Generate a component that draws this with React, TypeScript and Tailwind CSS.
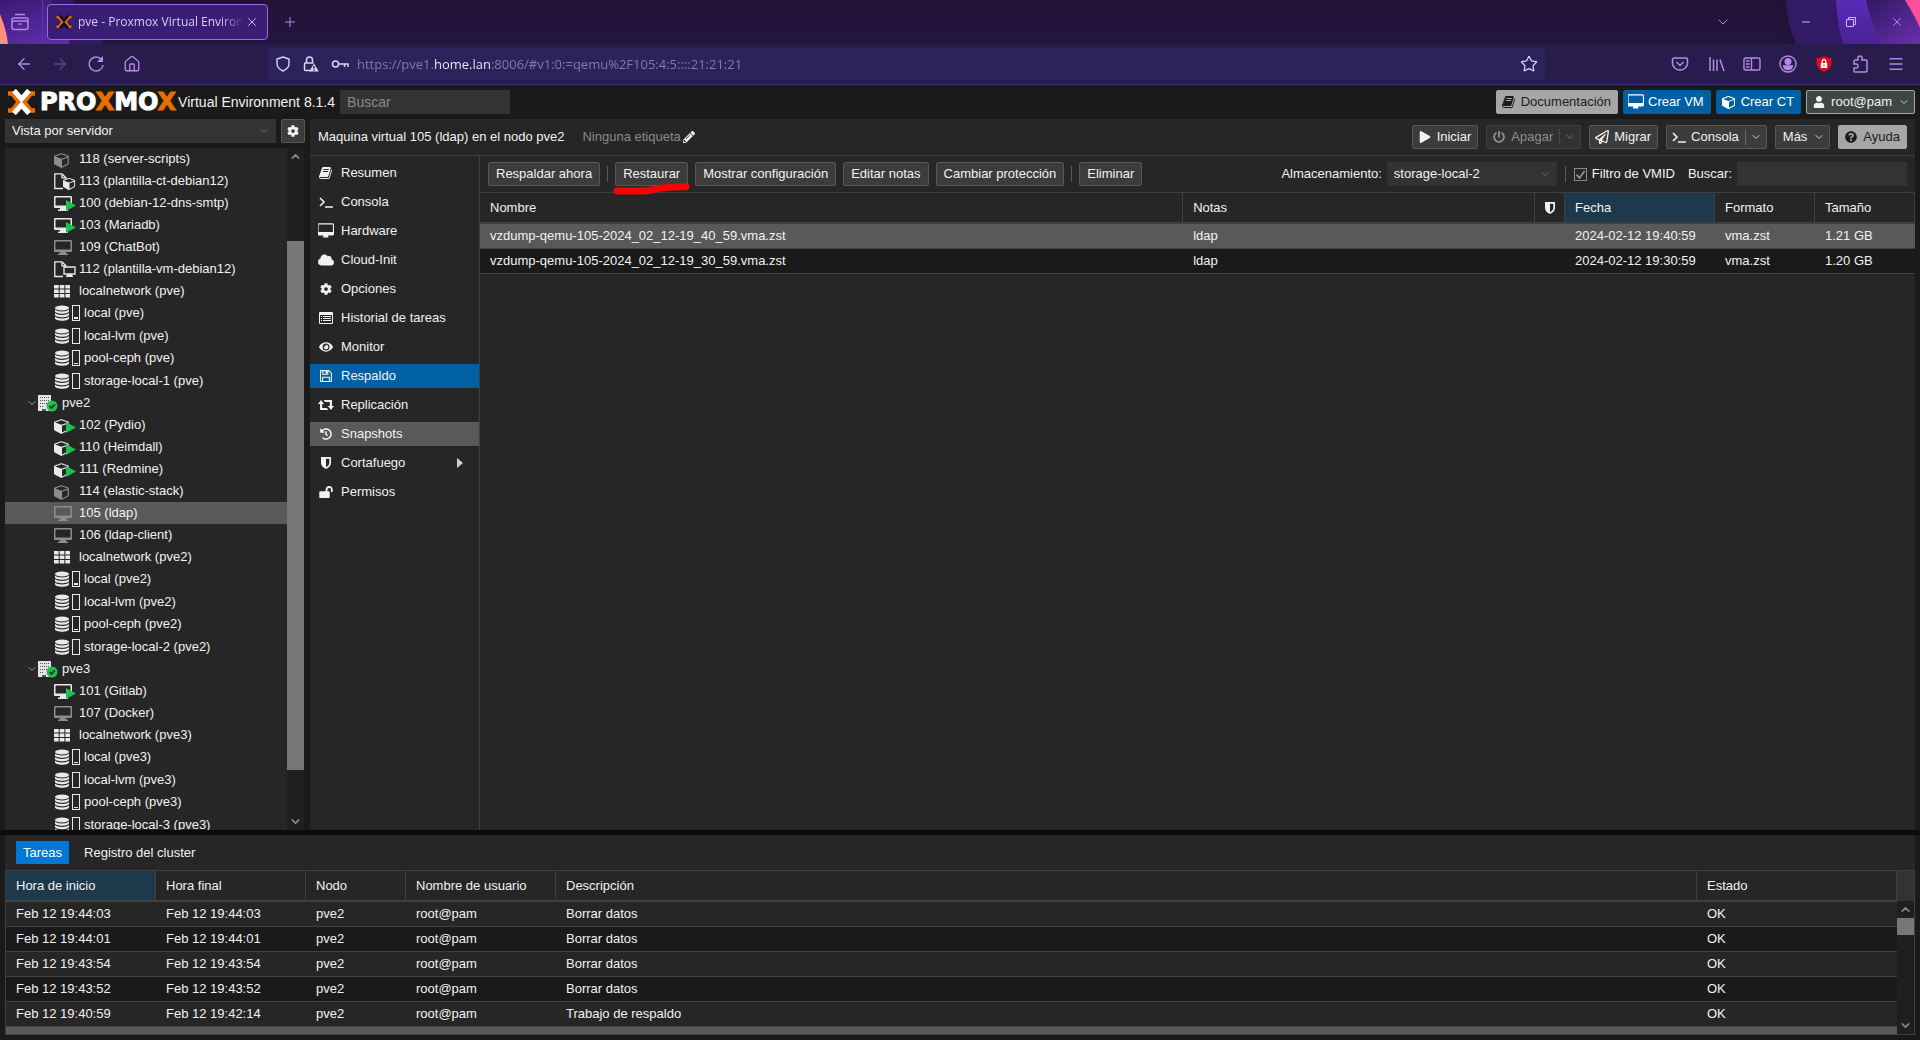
import React, { useState } from "react";
import {
  ArrowLeft,
  ArrowRight,
  ChevronDown,
  ChevronUp,
  House,
  Menu,
  Minus,
  Plus,
  Star,
  X,
} from "lucide-react";
import {
  FaCloud,
  FaCog,
  FaEye,
  FaHistory,
  FaLockOpen,
  FaPencilAlt,
  FaPlay,
  FaPowerOff,
  FaQuestionCircle,
  FaRegPaperPlane,
  FaUser,
} from "react-icons/fa";

type NodeKind =
  | "ct-off"
  | "ct-on"
  | "ct-template"
  | "vm-off"
  | "vm-on"
  | "vm-template"
  | "network";

interface Guest {
  kind: NodeKind;
  label: string;
}

interface Storage {
  label: string;
  usage: number;
}

interface TreeNode {
  name: string;
  hidden?: boolean;
  guests: Guest[];
  storages: Storage[];
}

interface Backup {
  name: string;
  notes: string;
  date: string;
  format: string;
  size: string;
}

interface Task {
  start: string;
  end: string;
  node: string;
  user: string;
  description: string;
  status: string;
}

const tree: TreeNode[] = [
  {
    name: "pve",
    hidden: true,
    guests: [
      { kind: "ct-off", label: "118 (server-scripts)" },
      { kind: "ct-template", label: "113 (plantilla-ct-debian12)" },
      { kind: "vm-on", label: "100 (debian-12-dns-smtp)" },
      { kind: "vm-on", label: "103 (Mariadb)" },
      { kind: "vm-off", label: "109 (ChatBot)" },
      { kind: "vm-template", label: "112 (plantilla-vm-debian12)" },
      { kind: "network", label: "localnetwork (pve)" },
    ],
    storages: [
      { label: "local (pve)", usage: 2 },
      { label: "local-lvm (pve)", usage: 0 },
      { label: "pool-ceph (pve)", usage: 1 },
      { label: "storage-local-1 (pve)", usage: 0 },
    ],
  },
  {
    name: "pve2",
    guests: [
      { kind: "ct-on", label: "102 (Pydio)" },
      { kind: "ct-on", label: "110 (Heimdall)" },
      { kind: "ct-on", label: "111 (Redmine)" },
      { kind: "ct-off", label: "114 (elastic-stack)" },
      { kind: "vm-off", label: "105 (ldap)" },
      { kind: "vm-off", label: "106 (ldap-client)" },
      { kind: "network", label: "localnetwork (pve2)" },
    ],
    storages: [
      { label: "local (pve2)", usage: 2 },
      { label: "local-lvm (pve2)", usage: 0 },
      { label: "pool-ceph (pve2)", usage: 1 },
      { label: "storage-local-2 (pve2)", usage: 0 },
    ],
  },
  {
    name: "pve3",
    guests: [
      { kind: "vm-on", label: "101 (Gitlab)" },
      { kind: "vm-off", label: "107 (Docker)" },
      { kind: "network", label: "localnetwork (pve3)" },
    ],
    storages: [
      { label: "local (pve3)", usage: 1 },
      { label: "local-lvm (pve3)", usage: 0 },
      { label: "pool-ceph (pve3)", usage: 1 },
      { label: "storage-local-3 (pve3)", usage: 0 },
    ],
  },
];

const backups: Backup[] = [
  {
    name: "vzdump-qemu-105-2024_02_12-19_40_59.vma.zst",
    notes: "ldap",
    date: "2024-02-12 19:40:59",
    format: "vma.zst",
    size: "1.21 GB",
  },
  {
    name: "vzdump-qemu-105-2024_02_12-19_30_59.vma.zst",
    notes: "ldap",
    date: "2024-02-12 19:30:59",
    format: "vma.zst",
    size: "1.20 GB",
  },
];

const tasks: Task[] = [
  ["Feb 12 19:44:03", "Feb 12 19:44:03", "Borrar datos"],
  ["Feb 12 19:44:01", "Feb 12 19:44:01", "Borrar datos"],
  ["Feb 12 19:43:54", "Feb 12 19:43:54", "Borrar datos"],
  ["Feb 12 19:43:52", "Feb 12 19:43:52", "Borrar datos"],
  ["Feb 12 19:40:59", "Feb 12 19:42:14", "Trabajo de respaldo"],
].map(([start, end, description]) => ({
  start,
  end,
  node: "pve2",
  user: "root@pam",
  description,
  status: "OK",
}));

/* ---------- icons ---------- */

const CUBE_PATH =
  "M896 1629l640-349v-636l-640 233v752zm-64-865l698-254-698-254-698 254zm832-252v768q0 35-18 65t-49 47l-704 384q-28 16-61 16t-61-16l-704-384q-31-17-49-47t-18-65v-768q0-40 23-73t61-47l704-256q22-8 44-8t44 8l704 256q38 14 61 47t23 73z";
const DESKTOP_PATH =
  "M1728 992v-832q0-13-9.5-22.5t-22.5-9.5h-1600q-13 0-22.5 9.5t-9.5 22.5v832q0 13 9.5 22.5t22.5 9.5h1600q13 0 22.5-9.5t9.5-22.5zm128-832v1088q0 66-47 113t-113 47h-544q0 37 16 77.5t32 71 16 43.5q0 26-19 45t-45 19h-512q-26 0-45-19t-19-45q0-14 16-44t32-70 16-78h-544q-66 0-113-47t-47-113v-1088q0-66 47-113t113-47h1600q66 0 113 47t47 113z";

const BookIcon = ({ className = "w-3.5 h-3.5" }: { className?: string }) => (
  <svg viewBox="0 0 1792 1792" fill="currentColor" className={className}>
    <path d="M1639 478q40 57 18 129l-275 906q-19 64-76.5 107.5t-122.5 43.5h-923q-77 0-148.5-53.5t-99.5-131.5q-24-67-2-127 0-4 3-27t4-37q1-8-3-21.5t-3-19.5q2-11 8-21t16.5-23.5 16.5-23.5q23-38 45-91.5t30-91.5q3-10 .5-30t-.5-28q3-11 17-28t17-23q21-36 42-92t25-90q1-9-2.5-32t.5-28q4-13 22-30.5t22-22.5q19-26 42.5-84.5t27.5-96.5q1-8-3-25.5t-2-26.5q2-8 9-18t18-23 17-21q8-12 16.5-30.5t15-35 16-36 19.5-32 26.5-23.5 36-11.5 47.5 5.5l-1 3q38-9 51-9h761q74 0 114 56t18 130l-274 906q-36 119-71.5 153.5t-128.5 34.5h-869q-27 0-38 15-11 16-1 43 24 70 144 70h923q29 0 56-15.5t35-41.5l300-987q7-22 5-57 38 15 59 43zm-1064 2q-4 13 2 22.5t20 9.5h608q13 0 25.5-9.5t16.5-22.5l21-64q4-13-2-22.5t-20-9.5h-608q-13 0-25.5 9.5t-16.5 22.5zm-83 256q-4 13 2 22.5t20 9.5h608q13 0 25.5-9.5t16.5-22.5l21-64q4-13-2-22.5t-20-9.5h-608q-13 0-25.5 9.5t-16.5 22.5z" />
  </svg>
);

const CubeIcon = () => (
  <svg viewBox="0 0 1792 1792" fill="currentColor" className="w-3.5 h-3.5">
    <path d={CUBE_PATH} />
  </svg>
);

const DesktopIcon = () => (
  <svg viewBox="0 0 1856 1792" fill="currentColor" className="w-4 h-4">
    <path d={DESKTOP_PATH} />
  </svg>
);

const TerminalIcon = () => (
  <svg viewBox="0 0 14 12" className="w-3.5 h-3">
    <path
      d="M1 2l4 4-4 4M6 11h8"
      fill="none"
      stroke="currentColor"
      strokeWidth="1.6"
    />
  </svg>
);

const ListIcon = () => (
  <svg viewBox="0 0 14 12" className="w-3.5 h-3">
    <path
      fill="currentColor"
      fillRule="evenodd"
      d="M1 0h12a1 1 0 011 1v10a1 1 0 01-1 1H1a1 1 0 01-1-1V1a1 1 0 011-1zm0 3v8h12V3zM2 4h1v1H2zm2 0h8v1H4zM2 6h1v1H2zm2 0h8v1H4zM2 8h1v1H2zm2 0h8v1H4z"
    />
  </svg>
);

const SaveIcon = () => (
  <svg
    viewBox="0 0 12 12"
    className="w-3 h-3"
    fill="none"
    stroke="currentColor"
    strokeWidth="1.1"
  >
    <path d="M1 .6h7.800L11.400 3.200V11a.500.500 0 01-.500.500H1a.500.500 0 01-.500-.500V1.100A.500.500 0 011 .600zM2.800.600v3.600h5V.600M2.600 11.400V7.200h6.800v4.200" />
    <path d="M5.600 1h1.600v2.600H5.600z" fill="currentColor" stroke="none" />
  </svg>
);

const RetweetIcon = () => (
  <svg viewBox="0 0 16 12" className="w-4 h-3" fill="currentColor">
    <path d="M3 1l3.200 4H4.200v4h4.600l1.700 2H2.500a.500.500 0 01-.500-.500V5H0zM13 11L9.800 7h2V3H7.200L5.500 1h8a.500.500 0 01.500.500V7h2z" />
  </svg>
);

const ShieldIcon = () => (
  <svg viewBox="0 0 10 12" className="w-2.5 h-3">
    <path
      fill="currentColor"
      fillRule="evenodd"
      d="M0 0h10v6c0 3-2.500 5-5 6C2.500 11 0 9 0 6zM5 1.700v8.500C7 9 8.300 7.600 8.300 6V1.700z"
    />
  </svg>
);

const GuestIcon = ({ kind }: { kind: NodeKind }) => {
  const bright = "#e9e9e9";
  const dim = "#8c8c8c";
  const play = <path d="M12 6l10 5.500-10 5.500z" fill="#21bf4b" />;

  return (
    <svg viewBox="0 0 25 18" className="w-[25px] h-[18px] shrink-0">
      {kind === "network" && (
        <path
          fill={bright}
          d="M0 3h4.700v3.500H0zm5.700 0h4.700v3.500H5.700zm5.700 0H16v3.500h-4.600zM0 7.500h4.700V11H0zm5.700 0h4.700V11H5.700zm5.700 0H16V11h-4.600zM0 12h4.700v3.500H0zm5.700 0h4.700v3.500H5.700zm5.700 0H16v3.500h-4.600z"
        />
      )}
      {(kind === "ct-off" || kind === "ct-on") && (
        <svg x="0" y="2" width="16" height="16" viewBox="0 0 1792 1792">
          <path d={CUBE_PATH} fill={kind === "ct-on" ? bright : dim} />
        </svg>
      )}
      {(kind === "vm-off" || kind === "vm-on") && (
        <g fill={kind === "vm-on" ? bright : dim}>
          <path
            fillRule="evenodd"
            d="M1 2h16a1 1 0 011 1v10a1 1 0 01-1 1H1a1 1 0 01-1-1V3a1 1 0 011-1zm.500 1.500v8h15v-8z"
          />
          <path d="M6 14h6v1.500h2V17H4v-1.500h2z" />
        </g>
      )}
      {(kind === "ct-template" || kind === "vm-template") && (
        <path
          d="M9 16.500H.800V1.800H8l4 4V7M8 1.800v4h4"
          fill="none"
          stroke={bright}
          strokeWidth="1.300"
        />
      )}
      {kind === "ct-template" && (
        <svg x="9" y="5" width="13" height="13" viewBox="0 0 1792 1792">
          <path d={CUBE_PATH} fill={bright} />
        </svg>
      )}
      {kind === "vm-template" && (
        <g>
          <path
            d="M10 7h11v7H10z"
            fill="#262626"
            stroke={bright}
            strokeWidth="1.300"
          />
          <path d="M13 14h5v1.500h1V17h-7v-1.500h1z" fill={bright} />
        </g>
      )}
      {(kind === "ct-on" || kind === "vm-on") && play}
    </svg>
  );
};

const StorageIcon = ({ usage }: { usage: number }) => (
  <svg viewBox="0 0 30 18" className="w-[30px] h-[18px] shrink-0">
    <g fill="#e9e9e9">
      <ellipse cx="8" cy="4" rx="7" ry="2.600" />
      <path d="M1 5.500c2 2.600 12 2.600 14 0v2c-1 3-13 3-14 0z" />
      <path d="M1 9c2 2.600 12 2.600 14 0v2c-1 3-13 3-14 0z" />
      <path d="M1 12.500c2 2.600 12 2.600 14 0v2c-1 3-13 3-14 0z" />
    </g>
    <rect
      x="18.500"
      y="1.500"
      width="7"
      height="15"
      fill="none"
      stroke="#e9e9e9"
    />
    {usage > 0 && (
      <rect x="20" y={15 - usage} width="4" height={usage} fill="#e9e9e9" />
    )}
  </svg>
);

const HostIcon = () => (
  <svg viewBox="0 0 20 18" className="w-5 h-[18px] shrink-0">
    <path d="M0 1h13v16H0z" fill="#e4e4e4" />
    <path
      d="M2 3h1v1H2zm2 0h1v1H4zm2 0h1v1H6zm2 0h1v1H8zm2 0h1v1h-1zM2 6h1v1H2zm2 0h1v1H4zm2 0h1v1H6zm2 0h1v1H8zm2 0h1v1h-1zM2 9h1v1H2zm2 0h1v1H4zm2 0h1v1H6zm2 0h1v1H8zM2 12h1v1H2zm2 0h1v1H4zm0 3h4v2H4z"
      fill="#555"
    />
    <circle cx="14" cy="12" r="5.500" fill="#21bf4b" />
    <path
      d="M11.500 12l2 2 3.300-3.600"
      fill="none"
      stroke="#1c3323"
      strokeWidth="1.600"
    />
  </svg>
);

const XMark = ({ className, top }: { className: string; top: string }) => (
  <svg viewBox="0 0 29 26" className={className} fill="none">
    <path
      d="M1 4.500h4.500L12 13l-6.500 8.500H1M28 4.500h-4.500L17 13l6.500 8.500H28"
      stroke="#e57000"
      strokeWidth="4.600"
    />
    <path d="M7 1.500l7.500 8.500L22 1.500M7 24.500l7.500-8.500 7.500 8.500" stroke={top} strokeWidth="5" />
  </svg>
);

/* ---------- browser chrome ---------- */

const TabStrip = () => (
  <div className="relative h-11 flex items-center bg-linear-to-b from-[#231238] to-[#24153f] text-[#b589e8] overflow-hidden">
    <svg
      viewBox="0 0 104 44"
      className="absolute left-0 top-0 w-[104px] h-11"
      aria-hidden="true"
    >
      <defs>
        <linearGradient id="leftGlow" x1="0" y1="0" x2="0.5" y2="1">
          <stop offset="0" stopColor="#3b1a73" />
          <stop offset="1" stopColor="#5a2ca8" />
        </linearGradient>
      </defs>
      <path d="M0 0h72l32 44H0z" fill="#34196a" />
      <path d="M0 0h50l20 44H0z" fill="url(#leftGlow)" />
      <path d="M0 14c4 10 7 20 8 30H0z" fill="#ff8f7a" />
    </svg>
    <svg
      viewBox="0 0 140 44"
      className="absolute right-0 top-0 w-[140px] h-11"
      aria-hidden="true"
    >
      <defs>
        <linearGradient id="violet" x1="0" y1="0" x2="0" y2="1">
          <stop offset="0" stopColor="#5a2bb8" />
          <stop offset="1" stopColor="#4a2296" />
        </linearGradient>
        <linearGradient id="shade" x1="0" y1="0" x2="1" y2="1">
          <stop offset="0" stopColor="#30185f" />
          <stop offset="1" stopColor="#6a30b0" />
        </linearGradient>
        <linearGradient id="edge" x1="0" y1="0" x2="1" y2="0">
          <stop offset="0" stopColor="#1c0e30" stopOpacity="0" />
          <stop offset="1" stopColor="#1c0e30" />
        </linearGradient>
      </defs>
      <path d="M0 0h20l10 44H0z" fill="url(#edge)" />
      <path d="M6 0q1 24 10 44h124V0z" fill="#331a66" />
      <path d="M56 0q1 24 7 44h77V0z" fill="url(#violet)" />
      <path d="M86 0q5 24 16 44h38V0z" fill="url(#shade)" />
      <path d="M125 0q11 18 15 28V0z" fill="#ff4f9a" />
    </svg>
    <button
      type="button"
      aria-label="Firefox View"
      className="relative h-full w-[43px] pl-[11px] border-r border-[#5b3a94]"
    >
      <svg
        viewBox="0 0 18 18"
        className="w-[18px] h-[18px]"
        fill="none"
        stroke="currentColor"
        strokeWidth="1.500"
      >
        <path d="M4 1.500h10M2.500 5h13a1.500 1.500 0 011.500 1.500v8a2 2 0 01-2 2H3a2 2 0 01-2-2v-8A1.500 1.500 0 012.500 5zM1.500 8h15M7.500 11h3" />
      </svg>
    </button>
    <div className="relative ml-1 w-[221px] h-9 px-2 flex items-center border border-[#9a6be0] rounded bg-[#3a1d74] text-[#d9cdf5]">
      <XMark className="w-4 h-4 shrink-0" top="#180c28" />
      <span className="ml-1.5 flex-1 overflow-hidden whitespace-nowrap font-['Open_Sans',sans-serif] text-xs mask-r-from-85%">
        pve - Proxmox Virtual Environment
      </span>
      <button type="button" aria-label="Cerrar pestaña">
        <X className="w-3.5 h-3.5" strokeWidth={1.5} />
      </button>
    </div>
    <button type="button" aria-label="Nueva pestaña" className="ml-3.5">
      <Plus className="w-4 h-4" strokeWidth={1.5} />
    </button>
    <div className="relative ml-auto mr-4 flex items-center">
      <ChevronDown className="w-4 h-4 mr-[69px]" strokeWidth={1.5} />
      <div className="flex items-center gap-[33px] text-[#cdb6f5]">
        <Minus className="w-3 h-3" strokeWidth={2} />
        <svg
          viewBox="0 0 12 12"
          className="w-3 h-3"
          fill="none"
          stroke="currentColor"
        >
          <path d="M1.500 3.500h7v7h-7zM3.500 3.500v-2h7v7h-2" />
        </svg>
        <X className="w-3.5 h-3.5" strokeWidth={1.3} />
      </div>
    </div>
  </div>
);

const NavBar = () => (
  <div className="h-[41px] flex items-center bg-[#281c4c] border-b border-[#43306f] text-[#b589e8]">
    <div className="w-[267px] flex items-center gap-[18px] pl-[15px]">
      <ArrowLeft className="w-[18px] h-[18px]" strokeWidth={1.7} />
      <ArrowRight
        className="w-[18px] h-[18px] text-[#5b4485]"
        strokeWidth={1.7}
      />
      <svg
        viewBox="0 0 18 18"
        className="w-[18px] h-[18px]"
        fill="none"
        stroke="currentColor"
        strokeWidth="1.500"
      >
        <path d="M14.500 4.500A7 7 0 1016 10" />
        <path d="M16 1v6h-6z" fill="currentColor" stroke="none" />
      </svg>
      <House className="w-[18px] h-[18px]" strokeWidth={1.8} />
    </div>
    <div className="flex-1 h-8 flex items-center pl-2 pr-[7px] rounded bg-[#2d235c] text-[#dcd3f7]">
      <svg
        viewBox="0 0 16 16"
        className="w-4 h-4"
        fill="none"
        stroke="currentColor"
        strokeWidth="1.400"
      >
        <path d="M8 1l6 2v4.500c0 3.500-2.500 6-6 7.500-3.500-1.500-6-4-6-7.500V3z" />
      </svg>
      <svg
        viewBox="0 0 16 16"
        className="w-4 h-4 ml-3"
        fill="none"
        stroke="currentColor"
        strokeWidth="1.500"
      >
        <path d="M7 14.500H2.500a1 1 0 01-1-1V8a1 1 0 011-1h8M3.500 7V4a3 3 0 016 0v3" />
        <path d="M11 7.500l4.800 8H6.200z" fill="currentColor" stroke="none" />
        <path d="M11 10v2.500M11 13.300v1.200" stroke="#2d235c" />
      </svg>
      <svg
        viewBox="0 0 18 16"
        className="w-[18px] h-4 ml-3"
        fill="none"
        stroke="currentColor"
        strokeWidth="1.500"
      >
        <circle cx="4.500" cy="8" r="3" />
        <path d="M7.500 8H17v3M13.500 8v3" />
      </svg>
      <input
        type="text"
        aria-label="Dirección"
        defaultValue="https://pve1.home.lan:8006/#v1:0:=qemu%2F105:4:5::::21:21:21"
        className="flex-1 ml-2 outline-none font-['Open_Sans',sans-serif] text-[13px] text-transparent bg-clip-text bg-[linear-gradient(90deg,#877bb0_77px,#f3efff_77px,#f3efff_134px,#877bb0_134px)]"
      />
      <button type="button" aria-label="Marcador">
        <Star className="w-[18px] h-[18px]" strokeWidth={1.7} />
      </button>
    </div>
    <div className="ml-[126px] mr-[15px] flex items-center gap-[18px]">
      <svg
        viewBox="0 0 18 18"
        className="w-[18px] h-[18px]"
        fill="none"
        stroke="currentColor"
        strokeWidth="1.500"
      >
        <path d="M3 3h12a1.500 1.500 0 011.500 1.500V8a7.500 7 0 01-15 0V4.500A1.500 1.500 0 013 3zM5.500 7L9 10.500 12.500 7" />
      </svg>
      <svg
        viewBox="0 0 18 18"
        className="w-[18px] h-[18px]"
        fill="none"
        stroke="currentColor"
        strokeWidth="1.500"
      >
        <path d="M3 2v14M6.500 4.500V16M10 4.500V16M13 4.500L17 16" />
      </svg>
      <svg
        viewBox="0 0 18 18"
        className="w-[18px] h-[18px]"
        fill="none"
        stroke="currentColor"
        strokeWidth="1.400"
      >
        <path d="M2.500 3h13A1.500 1.500 0 0117 4.500v9a1.500 1.500 0 01-1.500 1.500h-13A1.500 1.500 0 011 13.500v-9A1.500 1.500 0 012.500 3zM8.500 3v12M3 6h3.500M3 9h3.500M3 12h3.500" />
      </svg>
      <svg
        viewBox="0 0 18 18"
        className="w-[18px] h-[18px]"
        fill="none"
        stroke="currentColor"
        strokeWidth="1.400"
      >
        <circle cx="9" cy="9" r="8" />
        <circle cx="9" cy="6.500" r="2.800" fill="currentColor" />
        <path d="M4.500 11h9c-.500 2-2 3.500-4.500 3.500S5 13 4.500 11z" fill="currentColor" />
      </svg>
      <svg viewBox="0 0 18 18" className="w-[18px] h-[18px]">
        <path
          d="M9 1c3 1.500 4.500 2 7.500 2v4.500c0 4.500-3 7.500-7.500 9.500-4.500-2-7.500-5-7.500-9.500V3C4.500 3 6 2.500 9 1z"
          fill="#e00b1c"
        />
        <path d="M5.800 8h6.400v5H5.800z" fill="#fff" />
        <path
          d="M7.200 8V6.500a1.800 1.800 0 013.600 0V8"
          fill="none"
          stroke="#fff"
          strokeWidth="1.200"
        />
        <path d="M8.500 9.500h1v2h-1z" fill="#e00b1c" />
      </svg>
      <svg
        viewBox="0 0 18 18"
        className="w-[18px] h-[18px]"
        fill="none"
        stroke="currentColor"
        strokeWidth="1.500"
      >
        <path d="M7 5V3a2 2 0 014 0v2h4a1 1 0 011 1v10a1 1 0 01-1 1H4a1 1 0 01-1-1v-3h2a2 2 0 000-4H3V6a1 1 0 011-1z" />
      </svg>
      <Menu className="w-[18px] h-[18px]" strokeWidth={1.7} />
    </div>
  </div>
);

/* ---------- shared controls ---------- */

interface ToolButtonProps {
  children: React.ReactNode;
  icon?: React.ReactNode;
  tone?: "dark" | "blue" | "light" | "user";
  split?: boolean;
  arrow?: boolean;
  disabled?: boolean;
}

const tones = {
  dark: "bg-[#3c3c3c] border-[#585858] text-[#f2f2f2]",
  blue: "bg-[#0060a4] border-[#0060a4] text-white",
  light: "bg-[#a6a6a6] border-[#a6a6a6] text-[#1c1c1c]",
  user: "bg-[#3f4745] border-[#a6a6a6] text-[#f2f2f2]",
};

const ToolButton: React.FC<ToolButtonProps> = ({
  children,
  icon,
  tone = "dark",
  split,
  arrow,
  disabled,
}) => (
  <button
    type="button"
    disabled={disabled}
    className={`h-6 shrink-0 flex items-center border rounded-xs whitespace-nowrap disabled:opacity-50 ${tones[tone]} ${icon ? "pl-1" : "pl-[7px]"} ${split || arrow ? "pr-1" : icon ? "pr-1.5" : "pr-[7px]"}`}
  >
    {icon && <span className="w-4 mr-1 flex justify-center">{icon}</span>}
    {children}
    {split && <span className="w-px h-4 ml-1.5 bg-[#6a6a6a]" />}
    {(split || arrow) && (
      <ChevronDown
        className={`w-3 h-3 opacity-80 ${split ? "ml-1" : "ml-1.5"}`}
        strokeWidth={2}
      />
    )}
  </button>
);

const Divider = () => <span className="w-px h-4 bg-[#595959]" />;

interface ComboProps {
  id: string;
  label: string;
  options: string[];
  className: string;
}

const Combo: React.FC<ComboProps> = ({ id, label, options, className }) => (
  <div className={`relative h-6 ${className}`}>
    <select
      id={id}
      aria-label={label}
      className="w-full h-full pl-[7px] pr-6 appearance-none bg-[#333333] outline-none"
    >
      {options.map((option) => (
        <option key={option}>{option}</option>
      ))}
    </select>
    <ChevronDown
      className="absolute right-1.5 top-1.5 w-3 h-3 text-[#777777] pointer-events-none"
      strokeWidth={1.5}
    />
  </div>
);

/* ---------- page sections ---------- */

const PageHeader = () => (
  <header className="h-[34px] shrink-0 flex items-center px-[5px]">
    <div className="pl-0.5 flex items-center">
      <XMark className="w-[29px] h-[26px]" top="#ffffff" />
      <span className="ml-1 text-2xl leading-6 font-bold font-['DejaVu_Sans',sans-serif] text-white [-webkit-text-stroke:1px]">
        PRO<span className="text-[#e57000]">X</span>MO
        <span className="text-[#e57000]">X</span>
      </span>
    </div>
    <span className="ml-0.5 text-sm">Virtual Environment 8.1.4</span>
    <input
      type="text"
      aria-label="Buscar"
      placeholder="Buscar"
      className="ml-[5px] w-[170px] h-6 px-[7px] text-sm bg-[#333333] placeholder-[#8a8a8a] outline-none"
    />
    <div className="ml-auto flex gap-[5px]">
      <ToolButton tone="light" icon={<BookIcon />}>
        Documentación
      </ToolButton>
      <ToolButton tone="blue" icon={<DesktopIcon />}>
        Crear VM
      </ToolButton>
      <ToolButton tone="blue" icon={<CubeIcon />}>
        Crear CT
      </ToolButton>
      <ToolButton tone="user" arrow icon={<FaUser className="w-3 h-3" />}>
        root@pam
      </ToolButton>
    </div>
  </header>
);

const ResourceTree = () => {
  const [selected, setSelected] = useState("105 (ldap)");

  return (
    <aside className="w-[300px] shrink-0 flex flex-col">
      <div className="flex gap-[5px]">
        <Combo
          id="view"
          label="Vista"
          options={["Vista por servidor"]}
          className="flex-1"
        />
        <button
          type="button"
          aria-label="Opciones de la vista"
          className="w-6 h-6 flex items-center justify-center rounded-xs border border-[#585858] bg-[#3c3c3c]"
        >
          <FaCog className="w-3 h-3" />
        </button>
      </div>
      <div className="mt-[5px] mr-px flex-1 min-h-0 flex bg-[#262626]">
        <div className="flex-1 overflow-hidden">
          {tree.map((node) => (
            <div key={node.name}>
              {!node.hidden && (
                <div className="h-[22px] pl-[21px] flex items-center">
                  <ChevronDown
                    className="w-3 h-3 text-[#9a9a9a]"
                    strokeWidth={2}
                  />
                  <HostIcon />
                  <span className="ml-1">{node.name}</span>
                </div>
              )}
              <ul>
                {node.guests.map((guest) => (
                  <li
                    key={guest.label}
                    onClick={() => setSelected(guest.label)}
                    className={`h-[22px] pl-[49px] flex items-center ${
                      guest.label === selected ? "bg-[#595959]" : ""
                    }`}
                  >
                    <GuestIcon kind={guest.kind} />
                    {guest.label}
                  </li>
                ))}
              </ul>
              <ul className="h-[90px] flex flex-col">
                {node.storages.map((storage) => (
                  <li
                    key={storage.label}
                    className="flex-1 pl-[49px] flex items-center"
                  >
                    <StorageIcon usage={storage.usage} />
                    {storage.label}
                  </li>
                ))}
              </ul>
            </div>
          ))}
        </div>
        <div className="w-[17px] flex flex-col bg-[#1f1f22] text-[#8a8a8a]">
          <ChevronUp className="w-[17px] h-[17px] p-0.5" strokeWidth={3} />
          <div className="flex-[76]" />
          <div className="flex-[529] bg-[#77777a]" />
          <div className="flex-[43]" />
          <ChevronDown className="w-[17px] h-[17px] p-0.5" strokeWidth={3} />
        </div>
      </div>
    </aside>
  );
};

const menuItems = [
  { label: "Resumen", icon: <BookIcon /> },
  { label: "Consola", icon: <TerminalIcon /> },
  { label: "Hardware", icon: <DesktopIcon /> },
  { label: "Cloud-Init", icon: <FaCloud className="w-4 h-4" /> },
  { label: "Opciones", icon: <FaCog className="w-3 h-3" /> },
  { label: "Historial de tareas", icon: <ListIcon /> },
  { label: "Monitor", icon: <FaEye className="w-3.5 h-3.5" /> },
  { label: "Respaldo", icon: <SaveIcon /> },
  { label: "Replicación", icon: <RetweetIcon /> },
  { label: "Snapshots", icon: <FaHistory className="w-3 h-3" /> },
  { label: "Cortafuego", icon: <ShieldIcon />, submenu: true },
  { label: "Permisos", icon: <FaLockOpen className="w-3.5 h-3" /> },
];

const SideMenu = () => (
  <nav className="w-[170px] shrink-0 pt-[5px] flex flex-col gap-[5px] border-r border-[#404040]">
    {menuItems.map(({ label, icon, submenu }) => (
      <a
        key={label}
        href="#"
        className={`h-6 pl-2 pr-4 flex items-center ${
          label === "Respaldo"
            ? "bg-[#0060a4]"
            : label === "Snapshots"
              ? "bg-[#595959]"
              : ""
        }`}
      >
        <span className="w-4 mr-[7px] flex justify-center">{icon}</span>
        {label}
        {submenu && (
          <svg viewBox="0 0 6 10" className="ml-auto w-1.5 h-2.5">
            <path d="M0 0l6 5-6 5z" fill="#cfcfcf" />
          </svg>
        )}
      </a>
    ))}
  </nav>
);

const headCell =
  "h-[31px] px-2.5 text-left font-normal border-r border-b-2 border-r-[#404040] border-b-[#404040]";

const BackupPanel = () => (
  <div className="flex-1 min-w-0 flex flex-col">
    <div className="h-9 shrink-0 px-2 flex items-center gap-[7px]">
      <ToolButton>Respaldar ahora</ToolButton>
      <Divider />
      <div className="relative">
        <ToolButton>Restaurar</ToolButton>
        <svg
          viewBox="0 0 77 12"
          className="absolute -left-0.5 top-[21px] w-[77px] h-3"
        >
          <path
            d="M4 8h26c10-.300 15-3.300 25-3.800l18-.500"
            fill="none"
            stroke="#fb0007"
            strokeWidth="7"
            strokeLinecap="round"
          />
        </svg>
      </div>
      <ToolButton>Mostrar configuración</ToolButton>
      <ToolButton>Editar notas</ToolButton>
      <ToolButton>Cambiar protección</ToolButton>
      <Divider />
      <ToolButton>Eliminar</ToolButton>
      <div className="ml-auto flex items-center">
        <label htmlFor="storage" className="mr-[5px]">
          Almacenamiento:
        </label>
        <Combo
          id="storage"
          label="Almacenamiento"
          options={["storage-local-2"]}
          className="w-[170px] mr-2"
        />
        <Divider />
        <span className="relative ml-2 mr-[5px] w-[13px] h-[13px]">
          <input
            id="vmid"
            type="checkbox"
            defaultChecked
            className="block w-[13px] h-[13px] appearance-none border border-[#8a8a8a]"
          />
          <svg
            viewBox="0 0 13 13"
            className="absolute inset-0 w-[13px] h-[13px] pointer-events-none"
          >
            <path
              d="M2.500 6.500l3 3.500 5-7"
              fill="none"
              stroke="#a0a0a0"
              strokeWidth="1.500"
            />
          </svg>
        </span>
        <label htmlFor="vmid">Filtro de VMID</label>
        <label htmlFor="filter" className="ml-[13px] mr-[5px]">
          Buscar:
        </label>
        <input
          id="filter"
          type="text"
          className="w-[170px] h-6 bg-[#333333] outline-none"
        />
      </div>
    </div>
    <table className="w-full table-fixed border-separate border-spacing-0 border-t border-[#404040]">
      <colgroup>
        <col className="w-[49%]" />
        <col />
        <col className="w-[30px]" />
        <col className="w-[150px]" />
        <col className="w-[100px]" />
        <col className="w-[100px]" />
      </colgroup>
      <thead>
        <tr>
          <th className={headCell}>Nombre</th>
          <th className={headCell}>Notas</th>
          <th className={headCell} aria-label="Protegido">
            <ShieldIcon />
          </th>
          <th className={`${headCell} bg-[#1e384c]`}>Fecha</th>
          <th className={headCell}>Formato</th>
          <th className={headCell}>Tamaño</th>
        </tr>
      </thead>
      <tbody>
        {backups.map((backup, index) => (
          <tr
            key={backup.name}
            className={`h-[25px] *:px-2.5 *:border-b *:border-[#404040] ${
              index === 0 ? "bg-[#595959]" : "bg-[#1a1a1a]"
            }`}
          >
            <td>{backup.name}</td>
            <td>{backup.notes}</td>
            <td></td>
            <td>{backup.date}</td>
            <td>{backup.format}</td>
            <td>{backup.size}</td>
          </tr>
        ))}
      </tbody>
    </table>
  </div>
);

const GuestPanel = () => (
  <main className="flex-1 min-w-0 flex flex-col bg-[#262626]">
    <div className="h-[37px] shrink-0 px-2 flex items-center border-b border-[#404040]">
      <span>Maquina virtual 105 (ldap) en el nodo pve2</span>
      <span className="ml-[18px] text-[#8a8a8a]">Ninguna etiqueta</span>
      <FaPencilAlt className="ml-0.5 w-3 h-3" />
      <div className="ml-auto flex gap-2">
        <ToolButton icon={<FaPlay className="w-3 h-3" />}>Iniciar</ToolButton>
        <ToolButton
          disabled
          split
          icon={<FaPowerOff className="w-3 h-3" />}
        >
          Apagar
        </ToolButton>
        <ToolButton icon={<FaRegPaperPlane className="w-3.5 h-3.5" />}>
          Migrar
        </ToolButton>
        <ToolButton split icon={<TerminalIcon />}>
          Consola
        </ToolButton>
        <ToolButton arrow>Más</ToolButton>
        <ToolButton
          tone="light"
          icon={<FaQuestionCircle className="w-3 h-3" />}
        >
          Ayuda
        </ToolButton>
      </div>
    </div>
    <div className="flex-1 min-h-0 flex">
      <SideMenu />
      <BackupPanel />
    </div>
  </main>
);

const TaskLog = () => {
  const [tab, setTab] = useState("Tareas");

  return (
    <section className="mx-[5px] mb-[5px] shrink-0 flex flex-col bg-[#262626]">
      <div className="h-[35px] px-[11px] flex items-center gap-2">
        {["Tareas", "Registro del cluster"].map((name) => (
          <button
            key={name}
            type="button"
            onClick={() => setTab(name)}
            className={`h-[23px] px-[7px] ${
              tab === name ? "bg-[#0078d4] text-white" : ""
            }`}
          >
            {name}
          </button>
        ))}
      </div>
      <div className="flex border border-[#404040]">
        <div className="flex-1">
          <table className="w-full table-fixed border-separate border-spacing-0">
            <colgroup>
              <col className="w-[150px]" />
              <col className="w-[150px]" />
              <col className="w-[100px]" />
              <col className="w-[150px]" />
              <col />
              <col className="w-[200px]" />
            </colgroup>
            <thead>
              <tr>
                <th className={`${headCell} bg-[#1e384c]`}>Hora de inicio</th>
                <th className={headCell}>Hora final</th>
                <th className={headCell}>Nodo</th>
                <th className={headCell}>Nombre de usuario</th>
                <th className={headCell}>Descripción</th>
                <th className={headCell}>Estado</th>
              </tr>
            </thead>
            <tbody>
              {tasks.map((task) => (
                <tr
                  key={task.start}
                  className="h-[25px] even:bg-[#1a1a1a] *:px-2.5 *:border-b *:border-[#404040]"
                >
                  <td>{task.start}</td>
                  <td>{task.end}</td>
                  <td>{task.node}</td>
                  <td>{task.user}</td>
                  <td>{task.description}</td>
                  <td>{task.status}</td>
                </tr>
              ))}
            </tbody>
          </table>
          <div className="h-[7px] bg-[#595959]" />
        </div>
        <div className="w-[17px] flex flex-col bg-[#1f1f22] text-[#8a8a8a]">
          <div className="h-[30px] bg-[#333333]" />
          <ChevronUp className="w-[17px] h-[17px] p-0.5" strokeWidth={3} />
          <div className="h-[17px] bg-[#77777a]" />
          <div className="flex-1" />
          <ChevronDown className="w-[17px] h-[17px] p-0.5" strokeWidth={3} />
        </div>
      </div>
    </section>
  );
};

const App: React.FC = () => {
  return (
    <div className="h-screen flex flex-col overflow-hidden bg-[#1a1a1a] text-[#f2f2f2] text-[13px] leading-4 font-['Liberation_Sans',Arial,sans-serif]">
      <TabStrip />
      <NavBar />
      <PageHeader />
      <div className="flex-1 min-h-0 flex gap-[5px] px-[5px]">
        <ResourceTree />
        <GuestPanel />
      </div>
      <div className="h-[5px] shrink-0 bg-[#0b0b0b]" />
      <TaskLog />
    </div>
  );
};

export default App;
